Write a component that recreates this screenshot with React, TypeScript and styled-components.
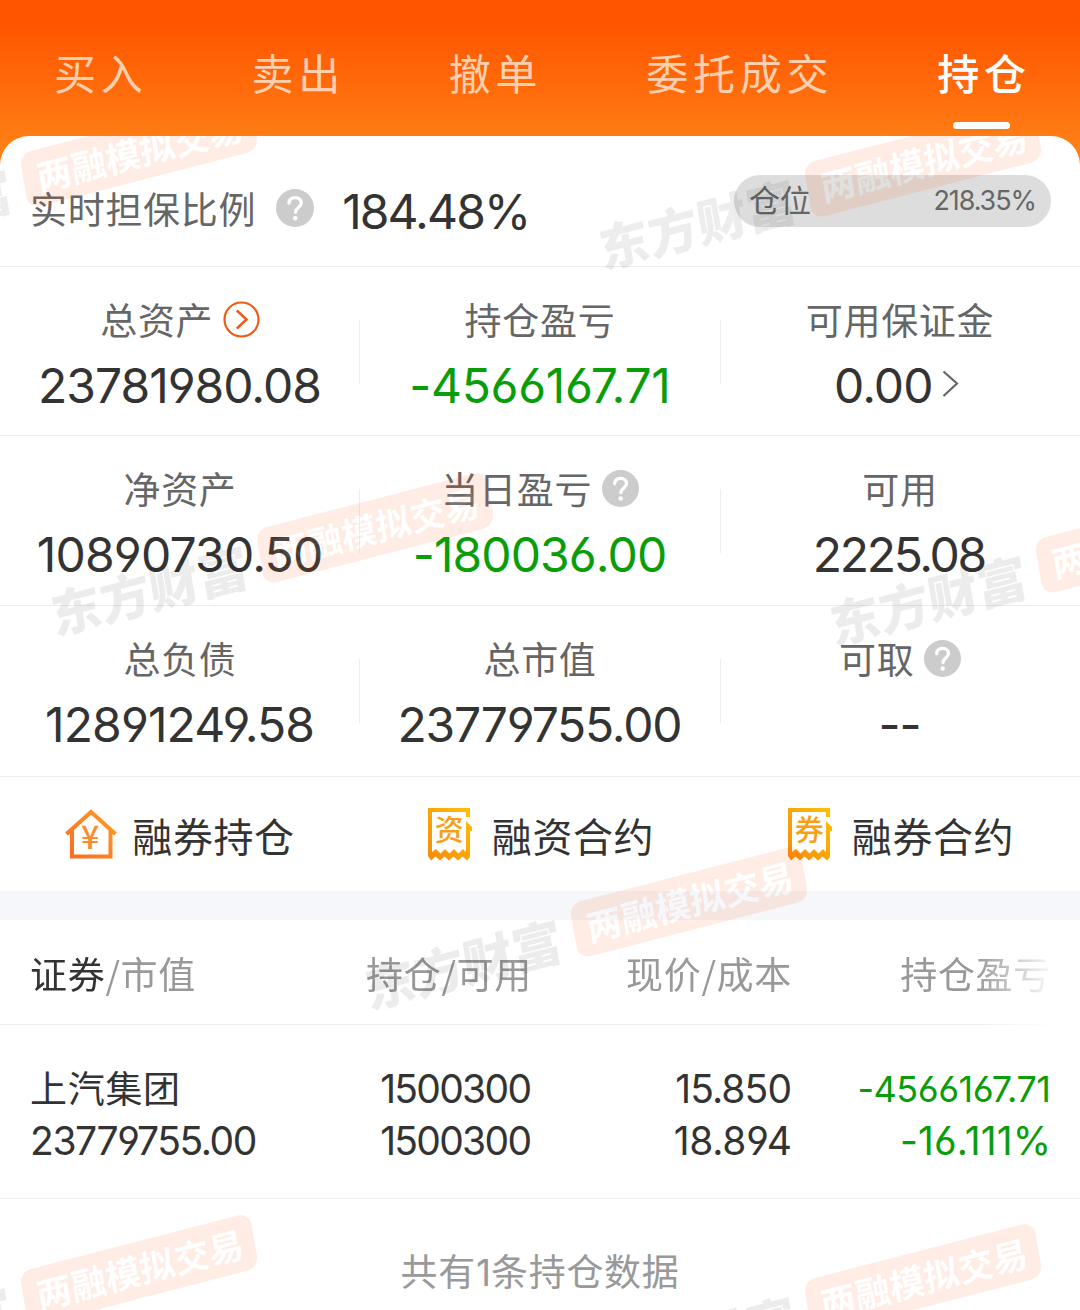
import React from "react";
import styled, { createGlobalStyle } from "styled-components";

const GlobalStyle = createGlobalStyle`
  body {
    margin: 0;
    background: #fff;
    font-family: "Noto Sans CJK SC", sans-serif;
    color: #333;
  }
`;

const Screen = styled.div`
  width: 1080px;
  height: 1310px;
  overflow: hidden;
  background: linear-gradient(180deg, #ff5500 24px, #ff7d14 140px, #ff8018 166px);
`;

const Tabs = styled.nav`
  box-sizing: border-box;
  height: 136px;
  display: flex;
  gap: 103.8px;
  padding-left: 54px;
`;

const Tab = styled.div<{ $active?: boolean }>`
  box-sizing: border-box;
  position: relative;
  height: 136px;
  padding-top: 42px;
  font-size: 42px;
  line-height: 60px;
  letter-spacing: 4.8px;
  white-space: nowrap;
  font-weight: ${(p) => (p.$active ? 500 : 400)};
  color: ${(p) => (p.$active ? "#fff" : "#ffcfae")};
`;

const TabMark = styled.span`
  position: absolute;
  left: 16px;
  top: 122px;
  width: 57px;
  height: 7px;
  border-radius: 4px;
  background: #fff;
`;

const Card = styled.main`
  position: relative;
  height: 1174px;
  overflow: hidden;
  border-radius: 29px 29px 0 0;
  background: #fff;
`;

const Num = styled.span<{ $size: number; $track: number; $color?: string }>`
  font-family: Inter, "Liberation Sans", sans-serif;
  font-feature-settings: "cv03", "cv04";
  font-size: ${(p) => p.$size}px;
  letter-spacing: ${(p) => p.$track}px;
  margin-right: ${(p) => -p.$track}px;
  color: ${(p) => p.$color ?? "#333"};
  white-space: nowrap;
`;

const Ratio = styled.section`
  box-sizing: border-box;
  height: 131px;
  border-bottom: 1px solid #eee;
  display: flex;
  align-items: center;
  padding: 14px 29px 0 30px;
`;

const Label = styled.span<{ $color?: string }>`
  font-size: 37px;
  line-height: 52px;
  letter-spacing: 0.7px;
  white-space: nowrap;
  color: ${(p) => p.$color ?? "#666"};
`;

const RatioLabel = styled(Label)`
  margin-right: 20px;
`;

const RatioValue = styled.div`
  flex: 1;
  padding: 18px 0 0 28px;
  line-height: 58px;
`;

const Pill = styled.div`
  box-sizing: border-box;
  width: 317px;
  height: 52px;
  margin-top: -15px;
  padding: 0 14px 0 15px;
  border-radius: 26px;
  background: #ddd;
  display: flex;
  align-items: center;
  justify-content: space-between;
`;

const PillLabel = styled.span`
  font-size: 31px;
  line-height: 46px;
  padding-bottom: 3px;
  color: #666;
`;

const StatRow = styled.section<{ $h: number }>`
  box-sizing: border-box;
  height: ${(p) => p.$h}px;
  border-bottom: 1px solid #eee;
  display: grid;
  grid-template-columns: 360px 360px 360px;
`;

const Stat = styled.div`
  display: flex;
  flex-direction: column;
  align-items: center;
  padding-top: 26px;
  background: linear-gradient(#eee, #eee) no-repeat 0 53px / 1px 64px;
  &:first-child {
    background-position: 359px 53px;
  }
  &:nth-child(2) {
    background: none;
  }
`;

const StatHead = styled.div`
  height: 52px;
  display: flex;
  align-items: center;
  gap: 9.5px;

  & > ${Label} {
    margin-top: -1px;
  }
`;

const StatValue = styled.div<{ $link?: boolean }>`
  height: 58px;
  margin-top: 12px;
  padding-right: ${(p) => (p.$link ? 7 : 0)}px;
  display: flex;
  align-items: center;
  gap: 8.5px;
  line-height: 58px;

  & > svg {
    margin-top: -5px;
  }
`;

const Links = styled.section`
  height: 114px;
  display: grid;
  grid-template-columns: 360px 360px 360px;
`;

const LinkItem = styled.div<{ $gap: number }>`
  display: flex;
  align-items: center;
  justify-content: center;
  gap: ${(p) => p.$gap}px;
  padding-top: 1px;
  font-size: 40px;
  letter-spacing: 0.6px;
`;

const Band = styled.div`
  height: 29px;
  background: #f6f7fa;
`;

const TableHead = styled.div`
  box-sizing: border-box;
  height: 105px;
  padding: 2px 29px 0 30px;
  display: grid;
  grid-template-columns: 260px 242px 260px 259px;
  align-items: center;
  border-bottom: 1px solid #eee;
  mask-image: linear-gradient(90deg, #000 975px, transparent 1056px);
`;

const Cell = styled.div<{ $right?: boolean }>`
  display: flex;
  flex-direction: column;
  align-items: ${(p) => (p.$right ? "flex-end" : "flex-start")};
`;

const Strong = styled.span`
  color: #333;
`;

const Holding = styled.div`
  box-sizing: border-box;
  height: 174px;
  padding: 38px 29px 0 30px;
  display: grid;
  grid-template-columns: 259px 243px 260px 259px;
  border-bottom: 1px solid #eee;
  line-height: 52px;
`;

const StockName = styled(Label)`
  line-height: 48px;
  padding-bottom: 4px;
`;

const Summary = styled.footer`
  padding-top: 45px;
  text-align: center;
`;

const Watermarks = styled.div`
  position: absolute;
  inset: 0;
  pointer-events: none;
`;

const Mark = styled.div<{ $x: number; $y: number }>`
  position: absolute;
  left: ${(p) => p.$x}px;
  top: ${(p) => p.$y}px;
  height: 56px;
  display: flex;
  align-items: center;
  transform-origin: 0 0;
  transform: matrix(0.968, -0.25, 0.17, 0.985, 0, 0);
  white-space: nowrap;
`;

const Brand = styled.span`
  width: 216px;
  padding-top: 3px;
  font-size: 50.5px;
  line-height: 56px;
  font-weight: 900;
  color: #000;
  opacity: 0.07;
`;

const Badge = styled.span`
  box-sizing: border-box;
  width: 238px;
  height: 56px;
  padding-left: 2px;
  border-radius: 12px;
  background: #ff5000;
  opacity: 0.1;
  color: #fff;
  font-size: 35.5px;
  line-height: 53px;
  font-weight: 600;
  text-align: center;
`;

const HelpIcon = ({ size = 37 }: { size?: number }) => (
  <svg width={size} height={size} viewBox="0 0 38 38" fill="none">
    <circle cx="19" cy="19" r="19" fill="#ccc" />
    <path
      d="M13 14c.3-3.600 2.800-5.400 6.100-5.400 3.500 0 6.100 2.100 6.100 5.300 0 4.400-5.700 4.900-5.700 9.300"
      stroke="#fff"
      strokeWidth="3.400"
      strokeLinecap="round"
    />
    <circle cx="19.200" cy="29.200" r="2.300" fill="#fff" />
  </svg>
);

const CircleArrow = () => (
  <svg width="37" height="37" viewBox="0 0 37 37" fill="none" stroke="#ee5c17">
    <circle cx="18.500" cy="18.500" r="17" strokeWidth="2.200" />
    <path d="M13.800 9.500l9.700 9-9.700 9" strokeWidth="2.500" />
  </svg>
);

const Arrow = () => (
  <svg width="17" height="28" viewBox="0 0 17 28" fill="none">
    <path d="M1.500 1.500L15 13.500 1.500 26" stroke="#666" strokeWidth="2.200" />
  </svg>
);

const HouseIcon = () => (
  <svg width="52" height="52" viewBox="0 0 52 52" fill="none">
    <defs>
      <linearGradient id="house" x1="0" y1="1" x2="1" y2="0">
        <stop offset="0" stopColor="#fb6a1e" />
        <stop offset="1" stopColor="#ff9d2b" />
      </linearGradient>
    </defs>
    <path d="M1.500 25L26 3l24.500 22M7 21v26.500h38.500V21" stroke="url(#house)" strokeWidth="4" />
    <text x="25.500" y="40" textAnchor="middle" fontSize="32" fontWeight="500" fill="#fb8b2b">
      ¥
    </text>
  </svg>
);

const TicketIcon = ({ char }: { char: string }) => (
  <svg width="46" height="54" viewBox="0 0 46 54" fill="none">
    <defs>
      <linearGradient id="ticket" x1="0" y1="1" x2="1" y2="0">
        <stop offset="0" stopColor="#f58a0c" />
        <stop offset="1" stopColor="#ffc107" />
      </linearGradient>
    </defs>
    <path
      fillRule="evenodd"
      fill="url(#ticket)"
      d="M2 0h42v9h-4V4H6v40l4-3 4.500 4.500L19 41l4.500 4.500L28 41l4.500 4.500L37 41l3 3V13l6 6v4h-2v26l-3 3.500-4.500-4-4.500 4-4.500-4-4.500 4-4.500-4-4.500 4-4.500-4-4.500 4L2 48z"
    />
    <text x="23.500" y="33" textAnchor="middle" fontSize="29" fontWeight="500" fill="#f9a012">
      {char}
    </text>
  </svg>
);

const GREEN = "#0a9d0a";

type StatData = {
  label: string;
  value: string;
  track: number;
  color?: string;
  icon?: React.ReactNode;
  arrow?: boolean;
};

const ROWS: { h: number; stats: StatData[] }[] = [
  {
    h: 169,
    stats: [
      { label: "总资产", value: "23781980.08", track: -1, icon: <CircleArrow /> },
      { label: "持仓盈亏", value: "-4566167.71", track: -0.3, color: GREEN },
      { label: "可用保证金", value: "0.00", track: -0.9, arrow: true },
    ],
  },
  {
    h: 170,
    stats: [
      { label: "净资产", value: "10890730.50", track: -0.8 },
      { label: "当日盈亏", value: "-180036.00", track: -0.9, color: GREEN, icon: <HelpIcon /> },
      { label: "可用", value: "2225.08", track: -2.3 },
    ],
  },
  {
    h: 171,
    stats: [
      { label: "总负债", value: "12891249.58", track: -0.9 },
      { label: "总市值", value: "23779755.00", track: -1.2 },
      { label: "可取", value: "--", track: -1, icon: <HelpIcon /> },
    ],
  },
];

const MARKS = [
  [-190, 72],
  [594, 82],
  [46, 448],
  [825, 458],
  [360, 822],
  [-190, 1190],
  [594, 1199],
];

export default function App() {
  return (
    <>
      <GlobalStyle />
      <Screen>
        <Tabs>
          <Tab>买入</Tab>
          <Tab>卖出</Tab>
          <Tab>撤单</Tab>
          <Tab>委托成交</Tab>
          <Tab $active>
            持仓
            <TabMark />
          </Tab>
        </Tabs>
        <Card>
          <Ratio>
            <RatioLabel>实时担保比例</RatioLabel>
            <HelpIcon size={38} />
            <RatioValue>
              <Num $size={48} $track={-1.9}>184.48%</Num>
            </RatioValue>
            <Pill>
              <PillLabel>仓位</PillLabel>
              <Num $size={27} $track={-1.1} $color="#666">218.35%</Num>
            </Pill>
          </Ratio>
          {ROWS.map((row, i) => (
            <StatRow key={i} $h={row.h}>
              {row.stats.map((s) => (
                <Stat key={s.label}>
                  <StatHead>
                    <Label>{s.label}</Label>
                    {s.icon}
                  </StatHead>
                  <StatValue $link={s.arrow}>
                    <Num $size={48} $track={s.track} $color={s.color}>{s.value}</Num>
                    {s.arrow && <Arrow />}
                  </StatValue>
                </Stat>
              ))}
            </StatRow>
          ))}
          <Links>
            <LinkItem $gap={15}><HouseIcon />融券持仓</LinkItem>
            <LinkItem $gap={20}><TicketIcon char="资" />融资合约</LinkItem>
            <LinkItem $gap={20}><TicketIcon char="券" />融券合约</LinkItem>
          </Links>
          <Band />
          <TableHead>
            <Cell><Label $color="#999"><Strong>证券</Strong>/市值</Label></Cell>
            <Cell $right><Label $color="#999">持仓/可用</Label></Cell>
            <Cell $right><Label $color="#999">现价/成本</Label></Cell>
            <Cell $right><Label $color="#999">持仓盈亏</Label></Cell>
          </TableHead>
          <Holding>
            <Cell>
              <StockName $color="#333">上汽集团</StockName>
              <Num $size={39} $track={-1.4}>23779755.00</Num>
            </Cell>
            <Cell $right>
              <Num $size={39} $track={-1.7}>1500300</Num>
              <Num $size={39} $track={-1.7}>1500300</Num>
            </Cell>
            <Cell $right>
              <Num $size={39} $track={-0.9}>15.850</Num>
              <Num $size={39} $track={-0.3}>18.894</Num>
            </Cell>
            <Cell $right>
              <Num $size={36} $track={-0.5} $color={GREEN}>-4566167.71</Num>
              <Num $size={39} $track={0.1} $color={GREEN}>-16.111%</Num>
            </Cell>
          </Holding>
          <Summary>
            <Label $color="#999">
              共有<Num $size={37} $track={0} $color="#999">1</Num>条持仓数据
            </Label>
          </Summary>
          <Watermarks>
            {MARKS.map(([x, y], i) => (
              <Mark key={i} $x={x} $y={y}>
                <Brand>东方财富</Brand>
                <Badge>两融模拟交易</Badge>
              </Mark>
            ))}
          </Watermarks>
        </Card>
      </Screen>
    </>
  );
}
